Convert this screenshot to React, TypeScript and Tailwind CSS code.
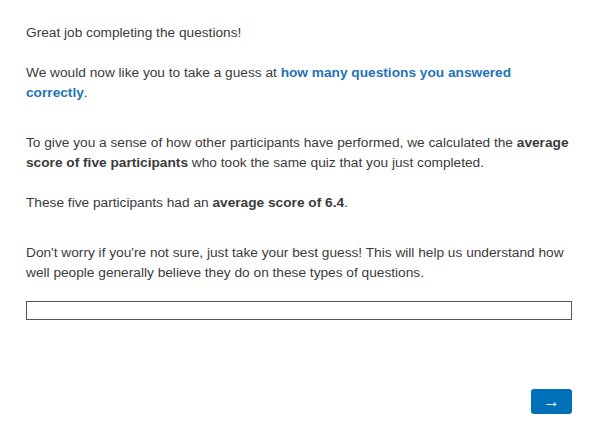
import React from "react";

const App = () => {
  return (
    <div className="min-h-screen bg-white font-['Liberation_Sans',Arial,sans-serif] text-[13.7px] leading-5 text-[#3b3b3b]">
      <div className="pl-[26px] pr-[32px] pt-[23px]">
        <p>Great job completing the questions!</p>
        <p className="mt-5">
          We would now like you to take a guess at{" "}
          <span className="font-bold text-[#1f73b7]">how many questions you answered correctly</span>.
        </p>
        <p className="mt-[30px]">
          To give you a sense of how other participants have performed, we calculated the{" "}
          <b>average score of five participants</b> who took the same quiz that you just completed.
        </p>
        <p className="mt-5">
          These five participants had an <b>average score of 6.4</b>.
        </p>
        <p className="mt-[30px]">
          Don't worry if you're not sure, just take your best guess! This will help us understand how
          well people generally believe they do on these types of questions.
        </p>
        <input
          type="text"
          className="mt-[18px] block h-[19px] w-full border border-[#555] bg-white px-1 outline-none"
        />
        <div className="mt-[69px] flex justify-end">
          <button className="flex h-[25px] w-[41px] items-center justify-center rounded-[3px] bg-[#0070b8] text-[17px] leading-none text-white">
            →
          </button>
        </div>
      </div>
    </div>
  );
};

export default App;
